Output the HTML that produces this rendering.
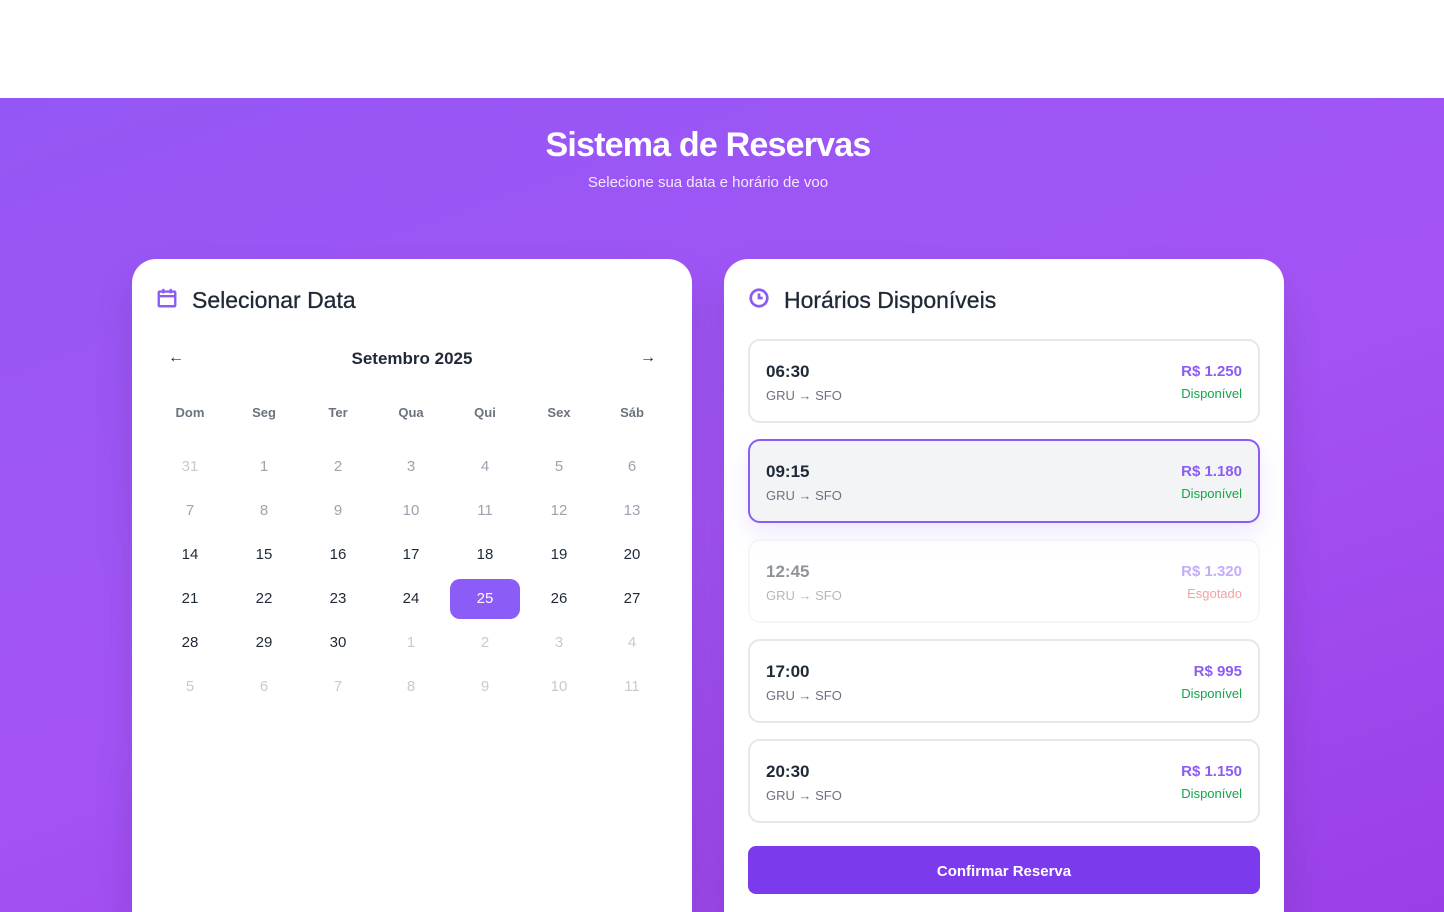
<!DOCTYPE html>
<html><head><meta charset="utf-8"><style>
*{box-sizing:border-box;margin:0;padding:0}
html,body{width:1444px;height:912px;overflow:hidden}
body{font-family:"Liberation Sans",sans-serif;background:#fff;position:relative;color:#1f2937}
.bg{position:absolute;top:98px;left:0;width:1444px;height:814px;background:linear-gradient(160deg,#9457f5 0%,#a454f6 50%,#9a3fe8 100%)}
h1{position:absolute;top:126px;width:100%;text-align:center;color:#fff;font-size:34px;font-weight:bold;letter-spacing:-0.8px;left:-14px}
.sub{position:absolute;top:174px;width:100%;text-align:center;color:#f3e8ff;font-size:15px;left:-14px}
.card{position:absolute;top:259px;width:560px;height:653px;background:#fff;border-radius:24px 24px 0 0;box-shadow:0 20px 40px rgba(0,0,0,.12)}
.title{position:absolute;left:60px;top:28px;font-size:23px;color:#1f2937;font-weight:normal;-webkit-text-stroke:0.3px #1f2937}
.ico{position:absolute;left:24px;top:28px}
.month{position:absolute;top:90px;width:100%;text-align:center;font-size:17px;font-weight:bold;color:#1f2937;left:0}
.arr{position:absolute;top:90px;font-size:16px;color:#1f2937}
.cell{position:absolute;width:70px;height:40px;line-height:40px;text-align:center;font-size:15px}
.hd{font-size:13px;color:#6b7280;font-weight:bold}
.dim{color:#c7cad1}
.sel{background:#8b5cf6;color:#fff;border-radius:10px}
.slot{position:absolute;left:24px;width:512px;height:84px;border:2px solid #e5e7eb;border-radius:12px;background:#fff}
.slot .t{position:absolute;left:16px;top:21px;font-size:17px;font-weight:bold;color:#1f2937}
.slot .r{position:absolute;left:16px;top:47px;font-size:13px;color:#6b7280}
.slot .p{position:absolute;right:16px;top:22px;font-size:15px;font-weight:bold;color:#8b5cf6}
.slot .s{position:absolute;right:16px;top:45px;font-size:13px;color:#16a34a}
.slot.on{border-color:#8b5cf6;background:#f3f4f6;box-shadow:0 10px 25px rgba(139,92,246,.15)}
.slot.off{opacity:.5;border-color:#eee}
.slot.off .s{color:#ef4444}
.btn{position:absolute;left:24px;top:587px;width:512px;height:48px;background:#7c3aed;border-radius:8px;color:#fff;font-weight:bold;font-size:15px;text-align:center;line-height:52px}
</style></head><body>
<div class="bg"></div>
<h1>Sistema de Reservas</h1>
<div class="sub">Selecione sua data e horário de voo</div>

<div class="card" style="left:132px">
<svg class="ico" width="22" height="22" viewBox="0 0 24 24" fill="none" stroke="#8b5cf6" stroke-width="2.6"><rect x="3" y="5" width="18" height="16" rx="1"/><path d="M3 10h18M8 2v5M16 2v5"/></svg>
<div class="title">Selecionar Data</div>
<div class="month">Setembro 2025</div>
<div class="arr" style="left:36px">←</div>
<div class="arr" style="left:508px">→</div>
<div id="cal"></div>
</div>

<div class="card" style="left:724px">
<svg class="ico" width="22" height="22" viewBox="0 0 24 24" fill="none" stroke="#8b5cf6" stroke-width="3"><circle cx="12" cy="12" r="9"/><path d="M12 7v5h4"/></svg>
<div class="title">Horários Disponíveis</div>
<div class="slot" style="top:80px"><div class="t">06:30</div><div class="r">GRU → SFO</div><div class="p">R$ 1.250</div><div class="s">Disponível</div></div>
<div class="slot on" style="top:180px"><div class="t">09:15</div><div class="r">GRU → SFO</div><div class="p">R$ 1.180</div><div class="s">Disponível</div></div>
<div class="slot off" style="top:280px"><div class="t">12:45</div><div class="r">GRU → SFO</div><div class="p">R$ 1.320</div><div class="s">Esgotado</div></div>
<div class="slot" style="top:380px"><div class="t">17:00</div><div class="r">GRU → SFO</div><div class="p">R$ 995</div><div class="s">Disponível</div></div>
<div class="slot" style="top:480px"><div class="t">20:30</div><div class="r">GRU → SFO</div><div class="p">R$ 1.150</div><div class="s">Disponível</div></div>
<div class="btn">Confirmar Reserva</div>
</div>

<script>
var c=document.getElementById('cal'),h='';
var cx=[58,132,206,279,353,427,500];
var hd=['Dom','Seg','Ter','Qua','Qui','Sex','Sáb'];
for(var i=0;i<7;i++)h+='<div class="cell hd" style="left:'+(cx[i]-35)+'px;top:134px">'+hd[i]+'</div>';
var days=[];days.push([31,1]);for(var d=1;d<=30;d++)days.push([d,d<14?2:0]);for(var d=1;d<=11;d++)days.push([d,1]);
for(var k=0;k<42;k++){var r=Math.floor(k/7),col=k%7,dd=days[k];var cls='cell'+(dd[1]?' dim':'')+(dd[0]==25&&!dd[1]?' sel':'');
var st=dd[1]==2?'color:#9ca3af;':'';
h+='<div class="'+cls+'" style="'+st+'left:'+(cx[col]-35)+'px;top:'+(188+r*44)+'px">'+dd[0]+'</div>';}
c.innerHTML=h;
</script>
</body></html>
